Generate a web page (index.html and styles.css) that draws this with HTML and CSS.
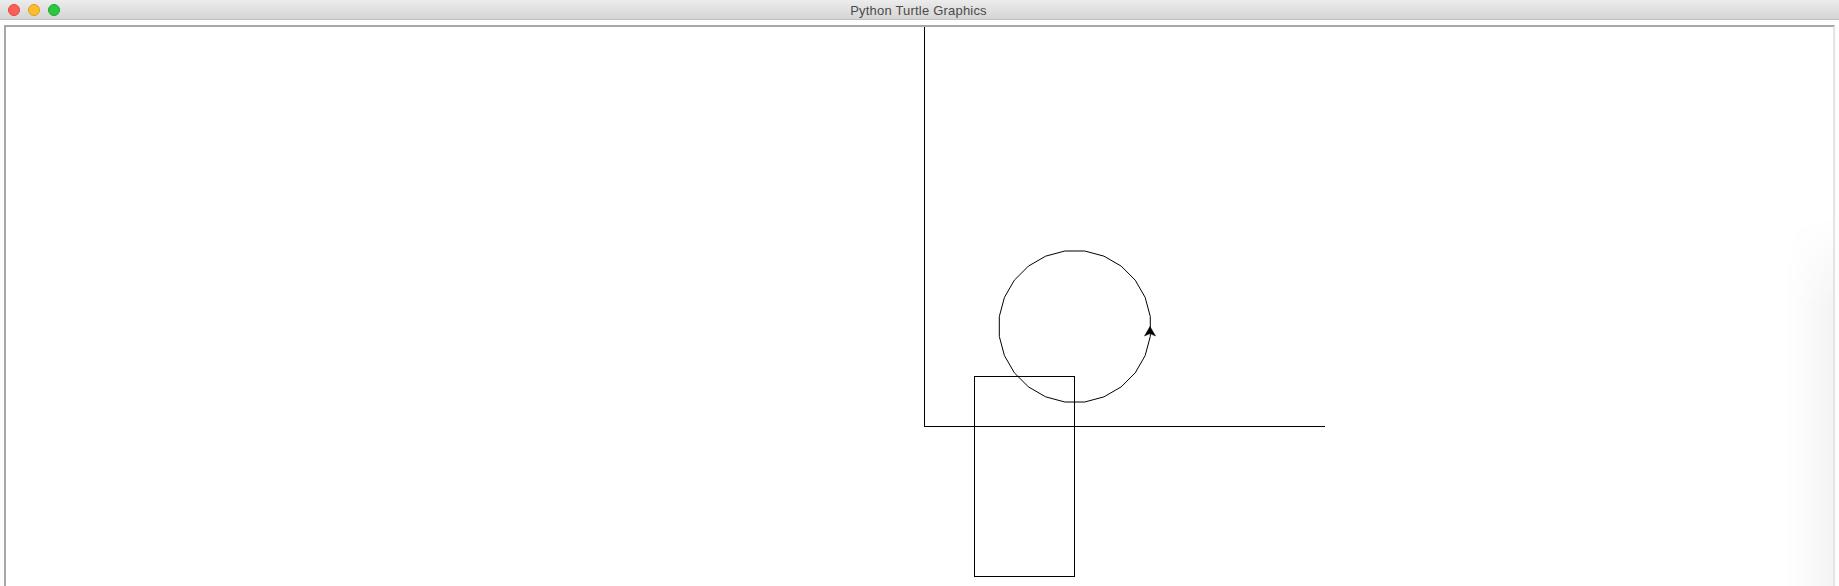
FILE: index.html
```html
<!DOCTYPE html>
<html>
<head>
<meta charset="utf-8">
<title>Python Turtle Graphics</title>
<link rel="stylesheet" href="styles.css">
</head>
<body>
<div class="window">
  <div class="titlebar">
    <div class="lights">
      <span class="light red"></span>
      <span class="light yellow"></span>
      <span class="light green"></span>
    </div>
    <div class="title">Python Turtle Graphics</div>
    <div></div>
  </div>
  <div class="content">
    <div class="canvas">
      <svg class="drawing" width="1827" height="559" viewBox="6 27 1827 559" xmlns="http://www.w3.org/2000/svg">
        <polyline class="crisp" points="924.5,26 924.5,426.5 1325,426.5" />
        <rect class="crisp" x="974.5" y="376.5" width="100" height="200" />
        <polygon class="circle" points="1150.3,316.56 1145.15,297.36 1135.21,280.14 1121.16,266.09 1103.94,256.15 1084.74,251.0 1064.86,251.0 1045.66,256.15 1028.44,266.09 1014.39,280.14 1004.45,297.36 999.3,316.56 999.3,336.44 1004.45,355.64 1014.39,372.86 1028.44,386.91 1045.66,396.85 1064.86,402.0 1084.74,402.0 1103.94,396.85 1121.16,386.91 1135.21,372.86 1145.15,355.64 1150.3,336.44" />
        <polygon class="turtle" points="1150,326.5 1144.5,336 1150,333.5 1155.5,336" />
      </svg>
      <div class="shade"></div>
    </div>
  </div>
</div>
</body>
</html>
```

FILE: styles.css
```css
html, body {
  margin: 0;
  padding: 0;
  background: #ffffff;
  overflow: hidden;
}

.window {
  width: 1839px;
  height: 586px;
  display: flex;
  flex-direction: column;
  background: #fdfdfd;
}

.titlebar {
  height: 19px;
  border-bottom: 1px solid #c0c0c0;
  background: linear-gradient(to bottom, #ececec, #d5d5d5);
  display: grid;
  grid-template-columns: 1fr auto 1fr;
  align-items: center;
  flex: none;
}

.lights {
  display: flex;
  gap: 8px;
  padding-left: 8px;
  align-items: center;
}

.light {
  width: 12px;
  height: 12px;
  border-radius: 50%;
  box-sizing: border-box;
}

.red {
  background: #fc5f57;
  border: 1px solid #e1463f;
}

.yellow {
  background: #fdbc2e;
  border: 1px solid #de9f1f;
}

.green {
  background: #2bc840;
  border: 1px solid #1fa630;
}

.title {
  font-family: "Liberation Sans", Arial, sans-serif;
  font-size: 13px;
  letter-spacing: 0.2px;
  color: #4b4b4b;
  line-height: 19px;
  padding-top: 1px;
  padding-right: 2px;
}

.content {
  flex: 1;
  padding: 5px 4px 0 4px;
  min-height: 0;
  display: flex;
}

.canvas {
  flex: 1;
  position: relative;
  background: #ffffff;
  border-left: 2px solid #a7a7a7;
  border-top: 2px solid #a7a7a7;
  border-right: 2px solid #e4e4e4;
  overflow: hidden;
}

.drawing {
  display: block;
}

.drawing polyline,
.drawing rect,
.drawing .circle {
  fill: none;
  stroke: #000000;
  stroke-width: 1;
}

.crisp {
  shape-rendering: crispEdges;
}

.turtle {
  fill: #000000;
  stroke: #000000;
  stroke-width: 0.5;
}

.shade {
  position: absolute;
  right: 0;
  top: 190px;
  bottom: 0;
  width: 48px;
  background: linear-gradient(to right, rgba(0,0,0,0), rgba(0,0,0,0.045));
  -webkit-mask-image: linear-gradient(to bottom, transparent, #000 90px);
  mask-image: linear-gradient(to bottom, transparent, #000 90px);
  pointer-events: none;
}
```
